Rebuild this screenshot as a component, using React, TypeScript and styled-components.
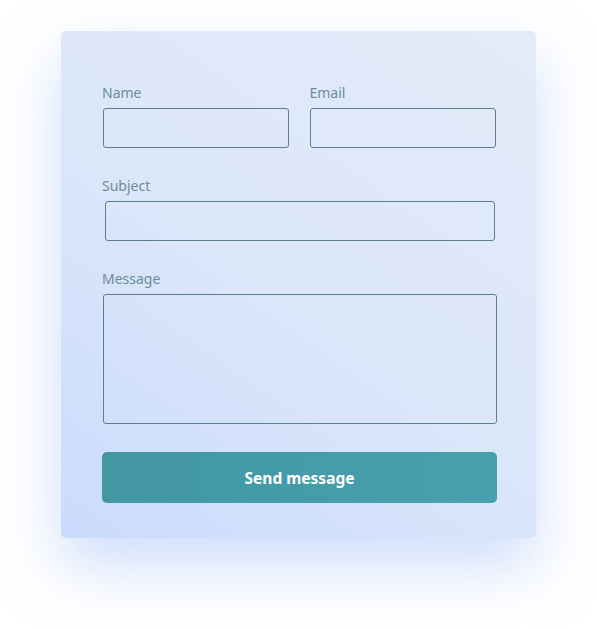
import React from 'react';
import styled, { createGlobalStyle } from 'styled-components';

const GlobalStyle = createGlobalStyle`
  html, body {
    margin: 0;
    padding: 0;
    background: #ffffff;
  }
  body {
    font-family: "Noto Sans", "Open Sans", sans-serif;
  }
`;

const Page = styled.div`
  width: 597px;
  height: 629px;
  padding: 31px 0 0 61px;
  box-sizing: border-box;
  overflow: hidden;
`;

const Card = styled.form`
  width: 475px;
  box-sizing: border-box;
  padding: 52px 39px 35px 41px;
  border-radius: 5px;
  background: linear-gradient(35deg, #c9dbfd 0%, #dbe6fa 45%, #e3ebf8 100%);
  box-shadow: 0 28px 60px rgba(160, 190, 250, 0.5);
  display: flex;
  flex-direction: column;
  gap: 28px;
`;

const Row = styled.div`
  display: grid;
  grid-template-columns: minmax(0, 1fr) minmax(0, 1fr);
  column-gap: 20px;
`;

const Field = styled.div<{ $inset?: string }>`
  display: flex;
  flex-direction: column;
  gap: 5px;
  min-width: 0;
  & > input,
  & > textarea {
    margin: ${p => p.$inset ?? '0'};
  }
`;

const Label = styled.label`
  font-size: 14px;
  line-height: 20px;
  color: #6b8e96;
`;

const Input = styled.input`
  width: auto;
  min-width: 0;
  height: 40px;
  box-sizing: border-box;
  border: 1.5px solid #5e7f88;
  border-radius: 3px;
  background: transparent;
  font-family: inherit;
  font-size: 14px;
  padding: 0 10px;
  outline: none;
`;

const TextArea = styled.textarea`
  height: 130px;
  box-sizing: border-box;
  border: 1.5px solid #5e7f88;
  border-radius: 3px;
  background: transparent;
  font-family: inherit;
  font-size: 14px;
  padding: 8px 10px;
  resize: none;
  outline: none;
`;

const SubmitButton = styled.button`
  height: 51px;
  border: none;
  border-radius: 5px;
  background: linear-gradient(90deg, #4397a3 0%, #48a0ae 100%);
  color: #ffffff;
  font-family: inherit;
  font-weight: 700;
  font-size: 15.5px;
  cursor: pointer;
`;

export default function App() {
  return (
    <>
      <GlobalStyle />
      <Page>
        <Card onSubmit={e => e.preventDefault()}>
          <Row>
            <Field $inset="0 1px 0 1px">
              <Label>Name</Label>
              <Input type="text" />
            </Field>
            <Field $inset="0 1px 0 0">
              <Label>Email</Label>
              <Input type="email" />
            </Field>
          </Row>
          <Field $inset="0 2px 0 3px">
            <Label>Subject</Label>
            <Input type="text" />
          </Field>
          <Field $inset="0 0 0 1px">
            <Label>Message</Label>
            <TextArea />
          </Field>
          <SubmitButton type="submit">Send message</SubmitButton>
        </Card>
      </Page>
    </>
  );
}
